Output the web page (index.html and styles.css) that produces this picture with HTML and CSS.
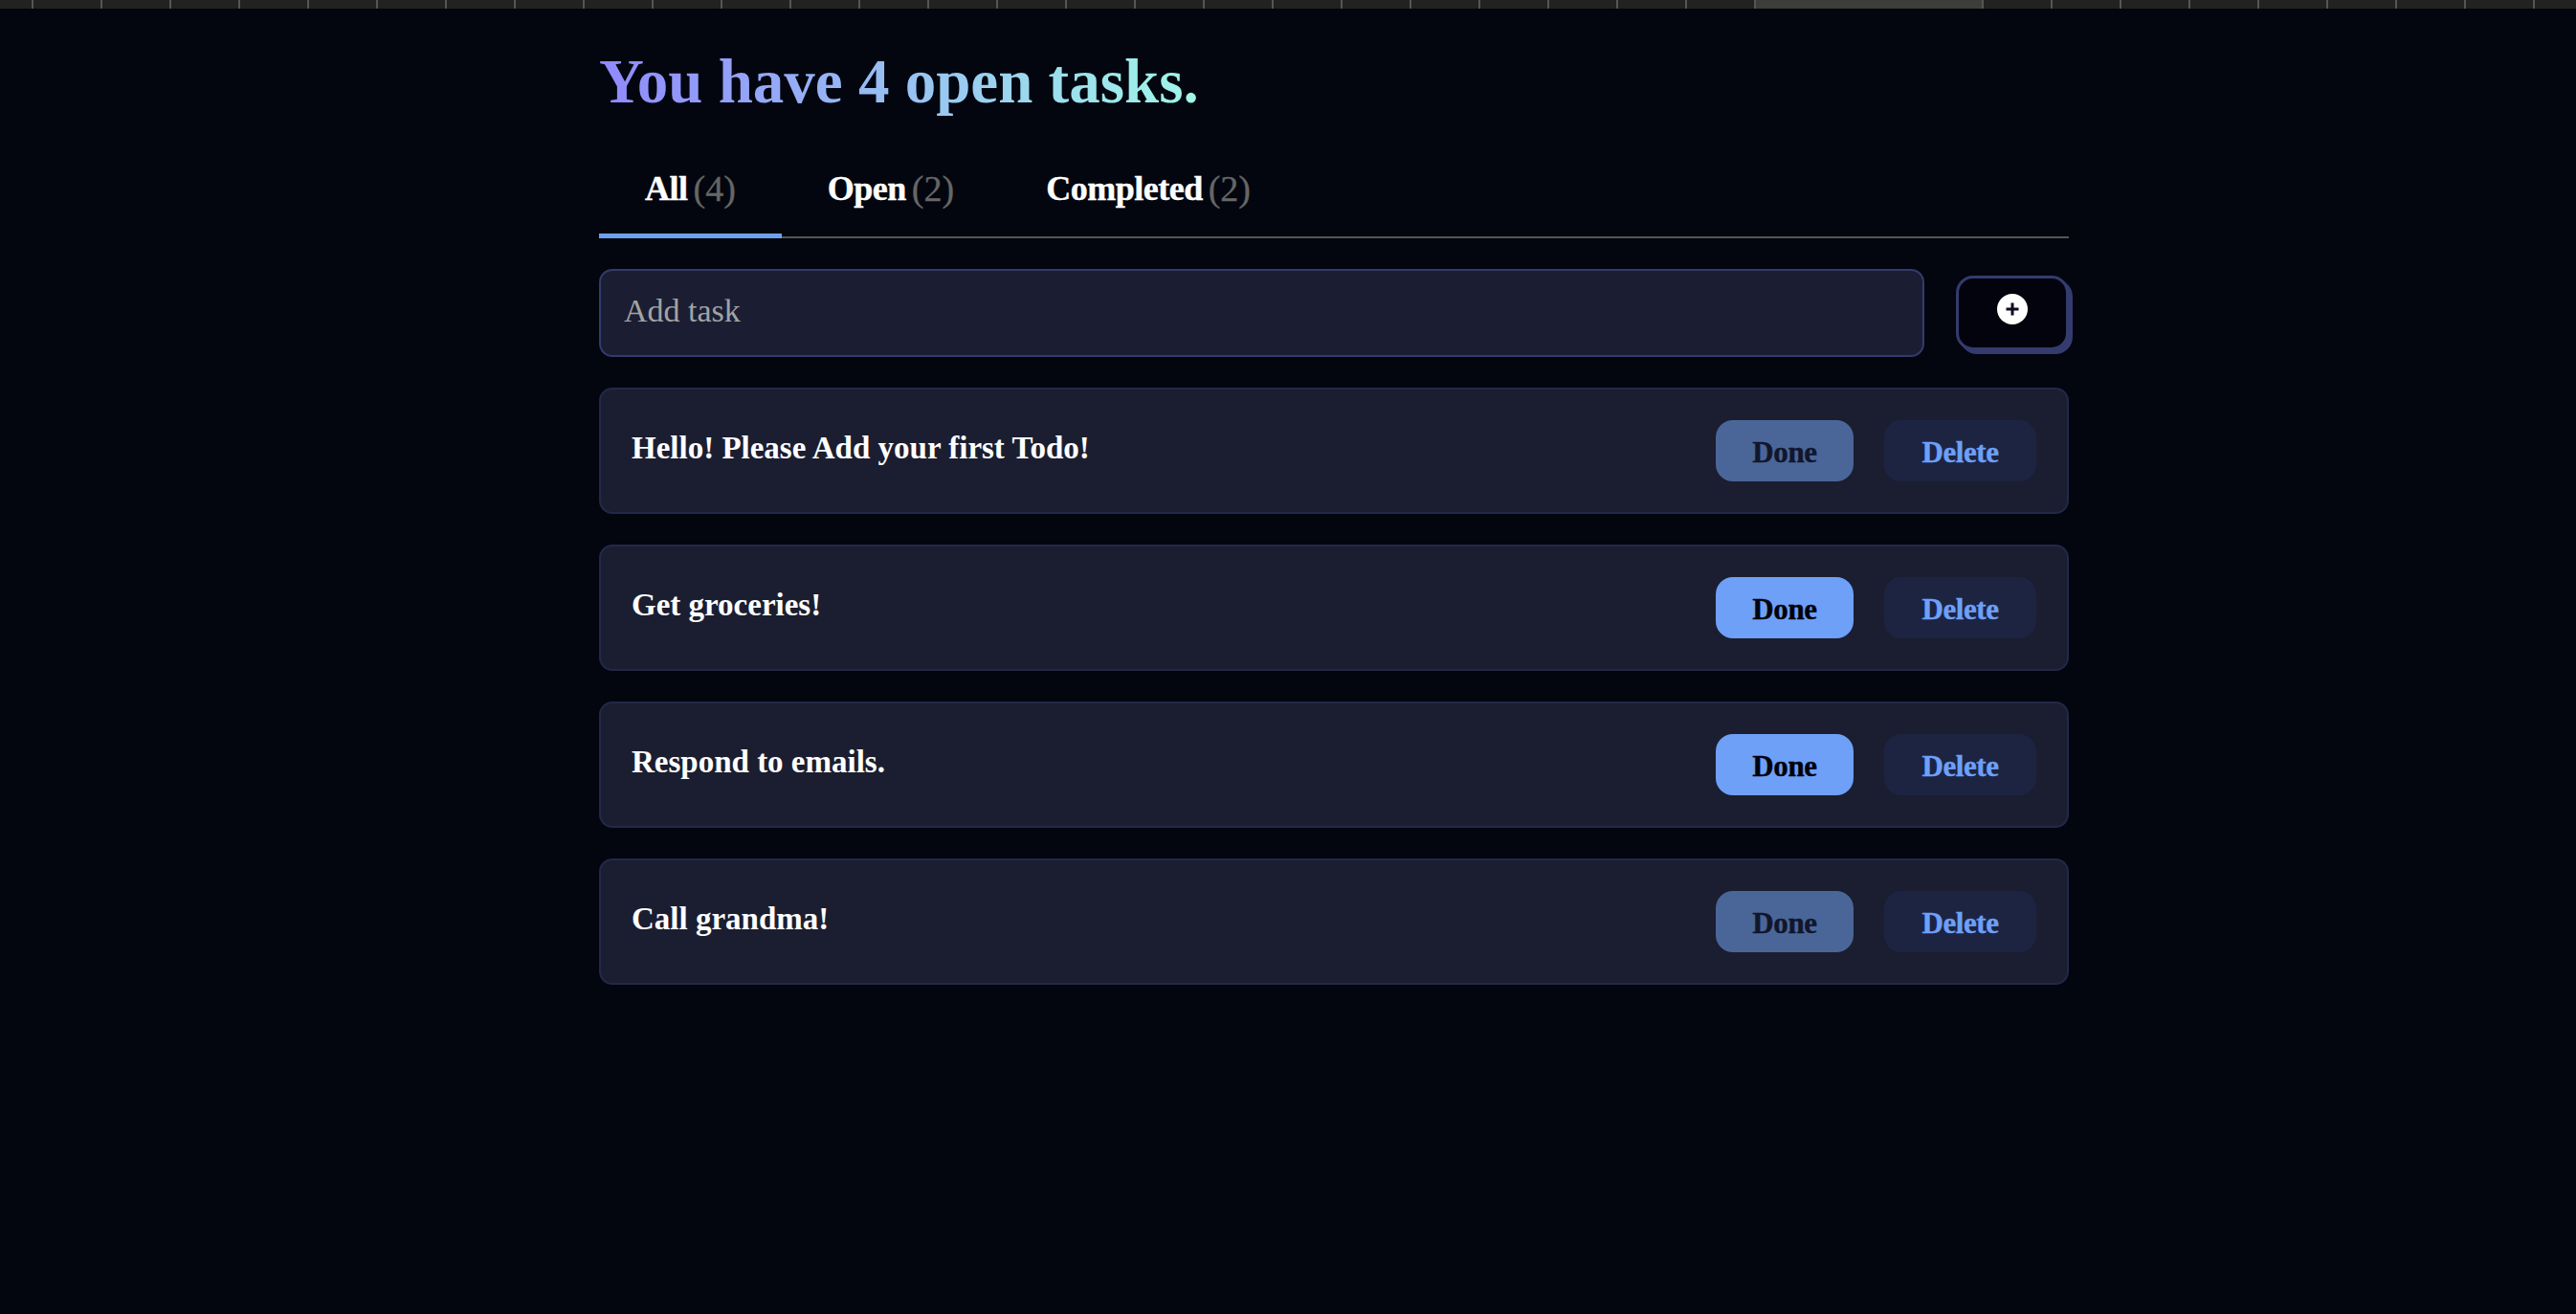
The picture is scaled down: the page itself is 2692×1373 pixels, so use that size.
FILE: index.html
```html
<!DOCTYPE html>
<html lang="en">

<head>
    <meta charset="utf-8">
    <title>Tasks</title>
    <link rel="stylesheet" href="styles.css">
</head>

<body>

    <div class="ruler">
        <div class="ruler-part"></div>
        <div class="ruler-active"></div>
        <div class="ruler-part ruler-rest"></div>
    </div>

    <main class="todo-app">
        <h1 class="todo-title">You have 4 open tasks.</h1>

        <div class="tabs">
            <a class="tab active">All<span class="tab-count">(4)</span></a>
            <a class="tab">Open<span class="tab-count">(2)</span></a>
            <a class="tab">Completed<span class="tab-count">(2)</span></a>
        </div>

        <form class="add-form">
            <input class="add-input" type="text" placeholder="Add task">
            <button class="add-button" type="button" aria-label="Add">
                <svg width="32" height="32" viewBox="0 0 32 32">
                    <circle cx="16" cy="16" r="16" fill="#ffffff" />
                    <path d="M16 9.500V22.500M9.500 16H22.500" stroke="#0b0d1c" stroke-width="3" fill="none" />
                </svg>
            </button>
        </form>

        <ul class="task-list">
            <li class="task">
                <span class="task-text">Hello! Please Add your first Todo!</span>
                <div class="task-actions">
                    <button class="btn-done dim" type="button">Done</button>
                    <button class="btn-delete" type="button">Delete</button>
                </div>
            </li>
            <li class="task">
                <span class="task-text">Get groceries!</span>
                <div class="task-actions">
                    <button class="btn-done" type="button">Done</button>
                    <button class="btn-delete" type="button">Delete</button>
                </div>
            </li>
            <li class="task">
                <span class="task-text">Respond to emails.</span>
                <div class="task-actions">
                    <button class="btn-done" type="button">Done</button>
                    <button class="btn-delete" type="button">Delete</button>
                </div>
            </li>
            <li class="task">
                <span class="task-text">Call grandma!</span>
                <div class="task-actions">
                    <button class="btn-done dim" type="button">Done</button>
                    <button class="btn-delete" type="button">Delete</button>
                </div>
            </li>
        </ul>
    </main>

</body>

</html>
```

FILE: styles.css
```css
* {
    box-sizing: border-box;
}

body {
    margin: 0;
    min-height: 100vh;
    background-color: #03060f;
    color: #ffffff;
    font-family: "Liberation Serif", serif;
}

/* Strip along the top */
.ruler {
    display: flex;
    height: 9px;
    background-color: #222220;
}

.ruler-part {
    width: 1833px;
    background-image: linear-gradient(to right, transparent 70px, #555552 70px);
    background-size: 72px 100%;
    background-position: 35px 0;
}

.ruler-active {
    width: 240px;
    border-left: 2px solid #555552;
    border-right: 2px solid #555552;
    background-color: #3d3d39;
}

.ruler-rest {
    flex: 1;
    background-position: 0 0;
}

/* Main column */
.todo-app {
    width: 1536px;
    margin-left: 626px;
}

.todo-title {
    width: fit-content;
    margin: 0;
    padding-top: 34px;
    font-size: 65px;
    line-height: 84px;
    font-weight: 700;
    background-image: linear-gradient(to right, #9089fc, #a0f8e8);
    -webkit-background-clip: text;
    background-clip: text;
    color: transparent;
}

/* Tabs */
.tabs {
    display: flex;
    margin-top: 38px;
    border-bottom: 2px solid #555555;
}

.tab {
    display: flex;
    gap: 6px;
    height: 84px;
    margin-bottom: -2px;
    padding: 0 48px;
    font-size: 36px;
    line-height: 64px;
    font-weight: 700;
    letter-spacing: -0.5px;
    white-space: nowrap;
    -webkit-text-stroke: 0.4px #ffffff;
}

.tab.active {
    border-bottom: 5px solid #6ea0f0;
}

.tab-count {
    color: #666666;
    font-size: 38px;
    font-weight: 400;
    letter-spacing: 0;
    -webkit-text-stroke: 0.3px #666666;
}

/* Add task */
.add-form {
    display: flex;
    align-items: flex-start;
    gap: 33px;
    margin-top: 32px;
}

.add-input {
    width: 1385px;
    height: 92px;
    padding: 0 24px 4px;
    border: 2px solid #333b6e;
    border-radius: 14px;
    outline: none;
    background-color: #1b1e33;
    color: #ffffff;
    font-family: inherit;
    font-size: 34px;
}

.add-input::placeholder {
    color: #a3a3a3;
    opacity: 1;
}

.add-button {
    display: flex;
    justify-content: center;
    width: 118px;
    height: 78px;
    margin-top: 7px;
    padding: 16px 0 0;
    border: 3px solid #343b6e;
    border-radius: 18px;
    background-color: #02030c;
    box-shadow: 4px 4px 0 #343b6e;
}

/* Task cards */
.task-list {
    display: flex;
    flex-direction: column;
    gap: 32px;
    margin: 32px 0 0;
    padding: 0;
    list-style: none;
}

.task {
    display: flex;
    justify-content: space-between;
    align-items: center;
    height: 132px;
    padding: 0 32px;
    border: 2px solid #232849;
    border-radius: 14px;
    background-color: #1b1e30;
}

.task-text {
    margin-bottom: 6px;
    font-size: 33px;
    font-weight: 700;
}

.task-actions {
    display: flex;
    gap: 32px;
}

.btn-done,
.btn-delete {
    height: 64px;
    padding: 4px 0 0;
    border: none;
    border-radius: 18px;
    font-family: inherit;
    font-size: 31px;
    font-weight: 700;
    letter-spacing: -0.4px;
    -webkit-text-stroke: 0.4px currentColor;
}

.btn-done {
    width: 144px;
    background-color: #6ea0f8;
    color: #02030c;
}

.btn-done.dim {
    background-color: #4a6699;
    color: #12162b;
}

.btn-delete {
    width: 159px;
    background-color: #1d2442;
    color: #6ea0f8;
}
```
